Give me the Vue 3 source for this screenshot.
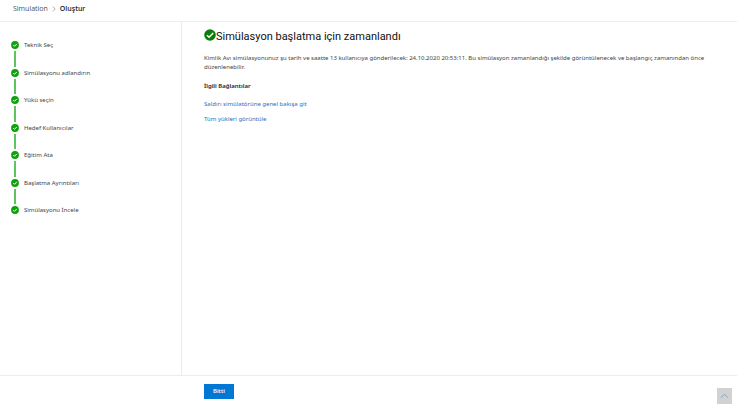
<script setup>
const steps = [
  'Teknik Seç',
  'Simülasyonu adlandırın',
  'Yükü seçin',
  'Hedef Kullanıcılar',
  'Eğitim Ata',
  'Başlatma Ayrıntıları',
  'Simülasyonu İncele',
]

const links = ['Saldırı simülatörüne genel bakışa git', 'Tüm yükleri görüntüle']

function scrollToTop() {
  window.scrollTo({ top: 0 })
}
</script>

<template>
  <div class="page">
    <nav class="breadcrumb" aria-label="Breadcrumb">
      <a href="#" class="crumb">Simulation</a>
      <svg class="chevron" viewBox="0 0 4 6" aria-hidden="true">
        <path d="M0.7 0.5 3.2 3 0.7 5.5" />
      </svg>
      <span class="current" aria-current="page">Oluştur</span>
    </nav>

    <div class="body">
      <aside class="sidebar">
        <ol class="steps">
          <li v-for="step in steps" :key="step" class="step">
            <svg class="step-icon" viewBox="0 0 8 8" aria-hidden="true">
              <circle cx="4" cy="4" r="3.9" />
              <path d="M2.3 4.1 3.5 5.3 5.8 2.9" />
            </svg>
            <span>{{ step }}</span>
          </li>
        </ol>
      </aside>

      <main class="content">
        <h1 class="title">
          <svg class="title-icon" viewBox="0 0 12 12" aria-hidden="true">
            <circle cx="6" cy="6" r="5.8" />
            <path d="M3 6.2 5.1 8.3 9.2 4.1" />
          </svg>
          <span>Simülasyon başlatma için zamanlandı</span>
        </h1>
        <p class="text">
          Kimlik Avı simülasyonunuz şu tarih ve saatte 13 kullanıcıya gönderilecek: 24.10.2020 20:53:11. Bu simülasyon
          zamanlandığı şekilde görüntülenecek ve başlangıç zamanından önce düzenlenebilir.
        </p>
        <h2 class="subtitle">İlgili Bağlantılar</h2>
        <ul class="links">
          <li v-for="link in links" :key="link"><a href="#">{{ link }}</a></li>
        </ul>
      </main>
    </div>

    <footer class="footer">
      <button type="button" class="done">Bitti</button>
      <button type="button" class="to-top" aria-label="Başa dön" @click="scrollToTop">
        <svg viewBox="0 0 10 6" aria-hidden="true">
          <path d="M1 5 5 1 9 5" />
        </svg>
      </button>
    </footer>
  </div>
</template>

<style>
body {
  margin: 0;
  background: #fff;
}
</style>

<style scoped>
.page {
  display: flex;
  flex-direction: column;
  min-height: 100vh;
  font-family: 'Noto Sans', 'Open Sans', sans-serif;
  font-size: 6px;
  line-height: 9px;
  color: #444;
}

.breadcrumb {
  display: flex;
  align-items: center;
  gap: 4px;
  padding: 3px 13px 6px;
  border-bottom: 1px solid #ececec;
  font-family: 'Open Sans', 'Noto Sans', sans-serif;
  font-size: 7px;
  line-height: 12px;
}

.crumb {
  color: #4a5057;
  text-decoration: none;
}

.chevron {
  width: 4px;
  height: 6px;
  fill: none;
  stroke: #8f8f8f;
  stroke-width: 0.7;
}

.current {
  font-weight: 600;
  color: #222;
}

.body {
  display: flex;
  flex: 1;
}

.sidebar {
  flex: 0 0 181px;
  border-right: 1px solid #ececec;
}

.steps {
  display: flex;
  flex-direction: column;
  margin: 0;
  padding: 19px 11px;
  list-style: none;
}

.step {
  position: relative;
  display: flex;
  align-items: center;
  gap: 5px;
  height: 8px;
  padding-bottom: 20px;
  line-height: 8px;
}

.step:nth-child(even) {
  padding-bottom: 19px;
}

.step:not(:last-child)::after {
  content: '';
  position: absolute;
  top: 10px;
  bottom: 2px;
  left: 3px;
  width: 2px;
  background: #5cc65c;
}

.step-icon {
  width: 8px;
  height: 8px;
}

.step-icon circle {
  fill: #0ca30c;
}

.step-icon path {
  fill: none;
  stroke: #fff;
  stroke-width: 1;
}

.content {
  flex: 1;
  min-width: 0;
  padding: 7px 24px 12px 22px;
}

.title {
  display: flex;
  align-items: flex-start;
  margin: 0 0 10px;
  font-family: Roboto, 'Open Sans', sans-serif;
  font-size: 11px;
  font-weight: 400;
  line-height: 15px;
  color: #111;
}

.title-icon {
  flex: none;
  width: 12px;
  height: 12px;
}

.title-icon circle {
  fill: #0b7d0b;
}

.title-icon path {
  fill: none;
  stroke: #fff;
  stroke-width: 1.5;
}

.text {
  margin: 0 0 10px;
}

.subtitle {
  margin: 0 0 9px;
  font-size: 6px;
  font-weight: 600;
  line-height: 9px;
  color: #222;
}

.links {
  display: flex;
  flex-direction: column;
  gap: 6px;
  margin: 0;
  padding: 0;
  list-style: none;
}

.links a {
  color: #1a73c2;
  text-decoration: none;
}

.footer {
  display: flex;
  justify-content: space-between;
  align-items: flex-end;
  height: 28px;
  padding: 0 5px 0 204px;
  border-top: 1px solid #ececec;
}

.done {
  width: 30px;
  height: 15px;
  margin: 0 0 5px;
  padding: 0;
  border: 0;
  background: #0078d4;
  color: #fff;
  font: 600 6px/15px 'Open Sans', 'Noto Sans', sans-serif;
}

.to-top {
  display: flex;
  align-items: center;
  justify-content: center;
  width: 15px;
  height: 16px;
  padding: 0;
  border: 0;
  background: #d2d2d2;
}

.to-top svg {
  width: 9px;
  height: 6px;
  fill: none;
  stroke: #6f9fd6;
  stroke-width: 1;
}
</style>
